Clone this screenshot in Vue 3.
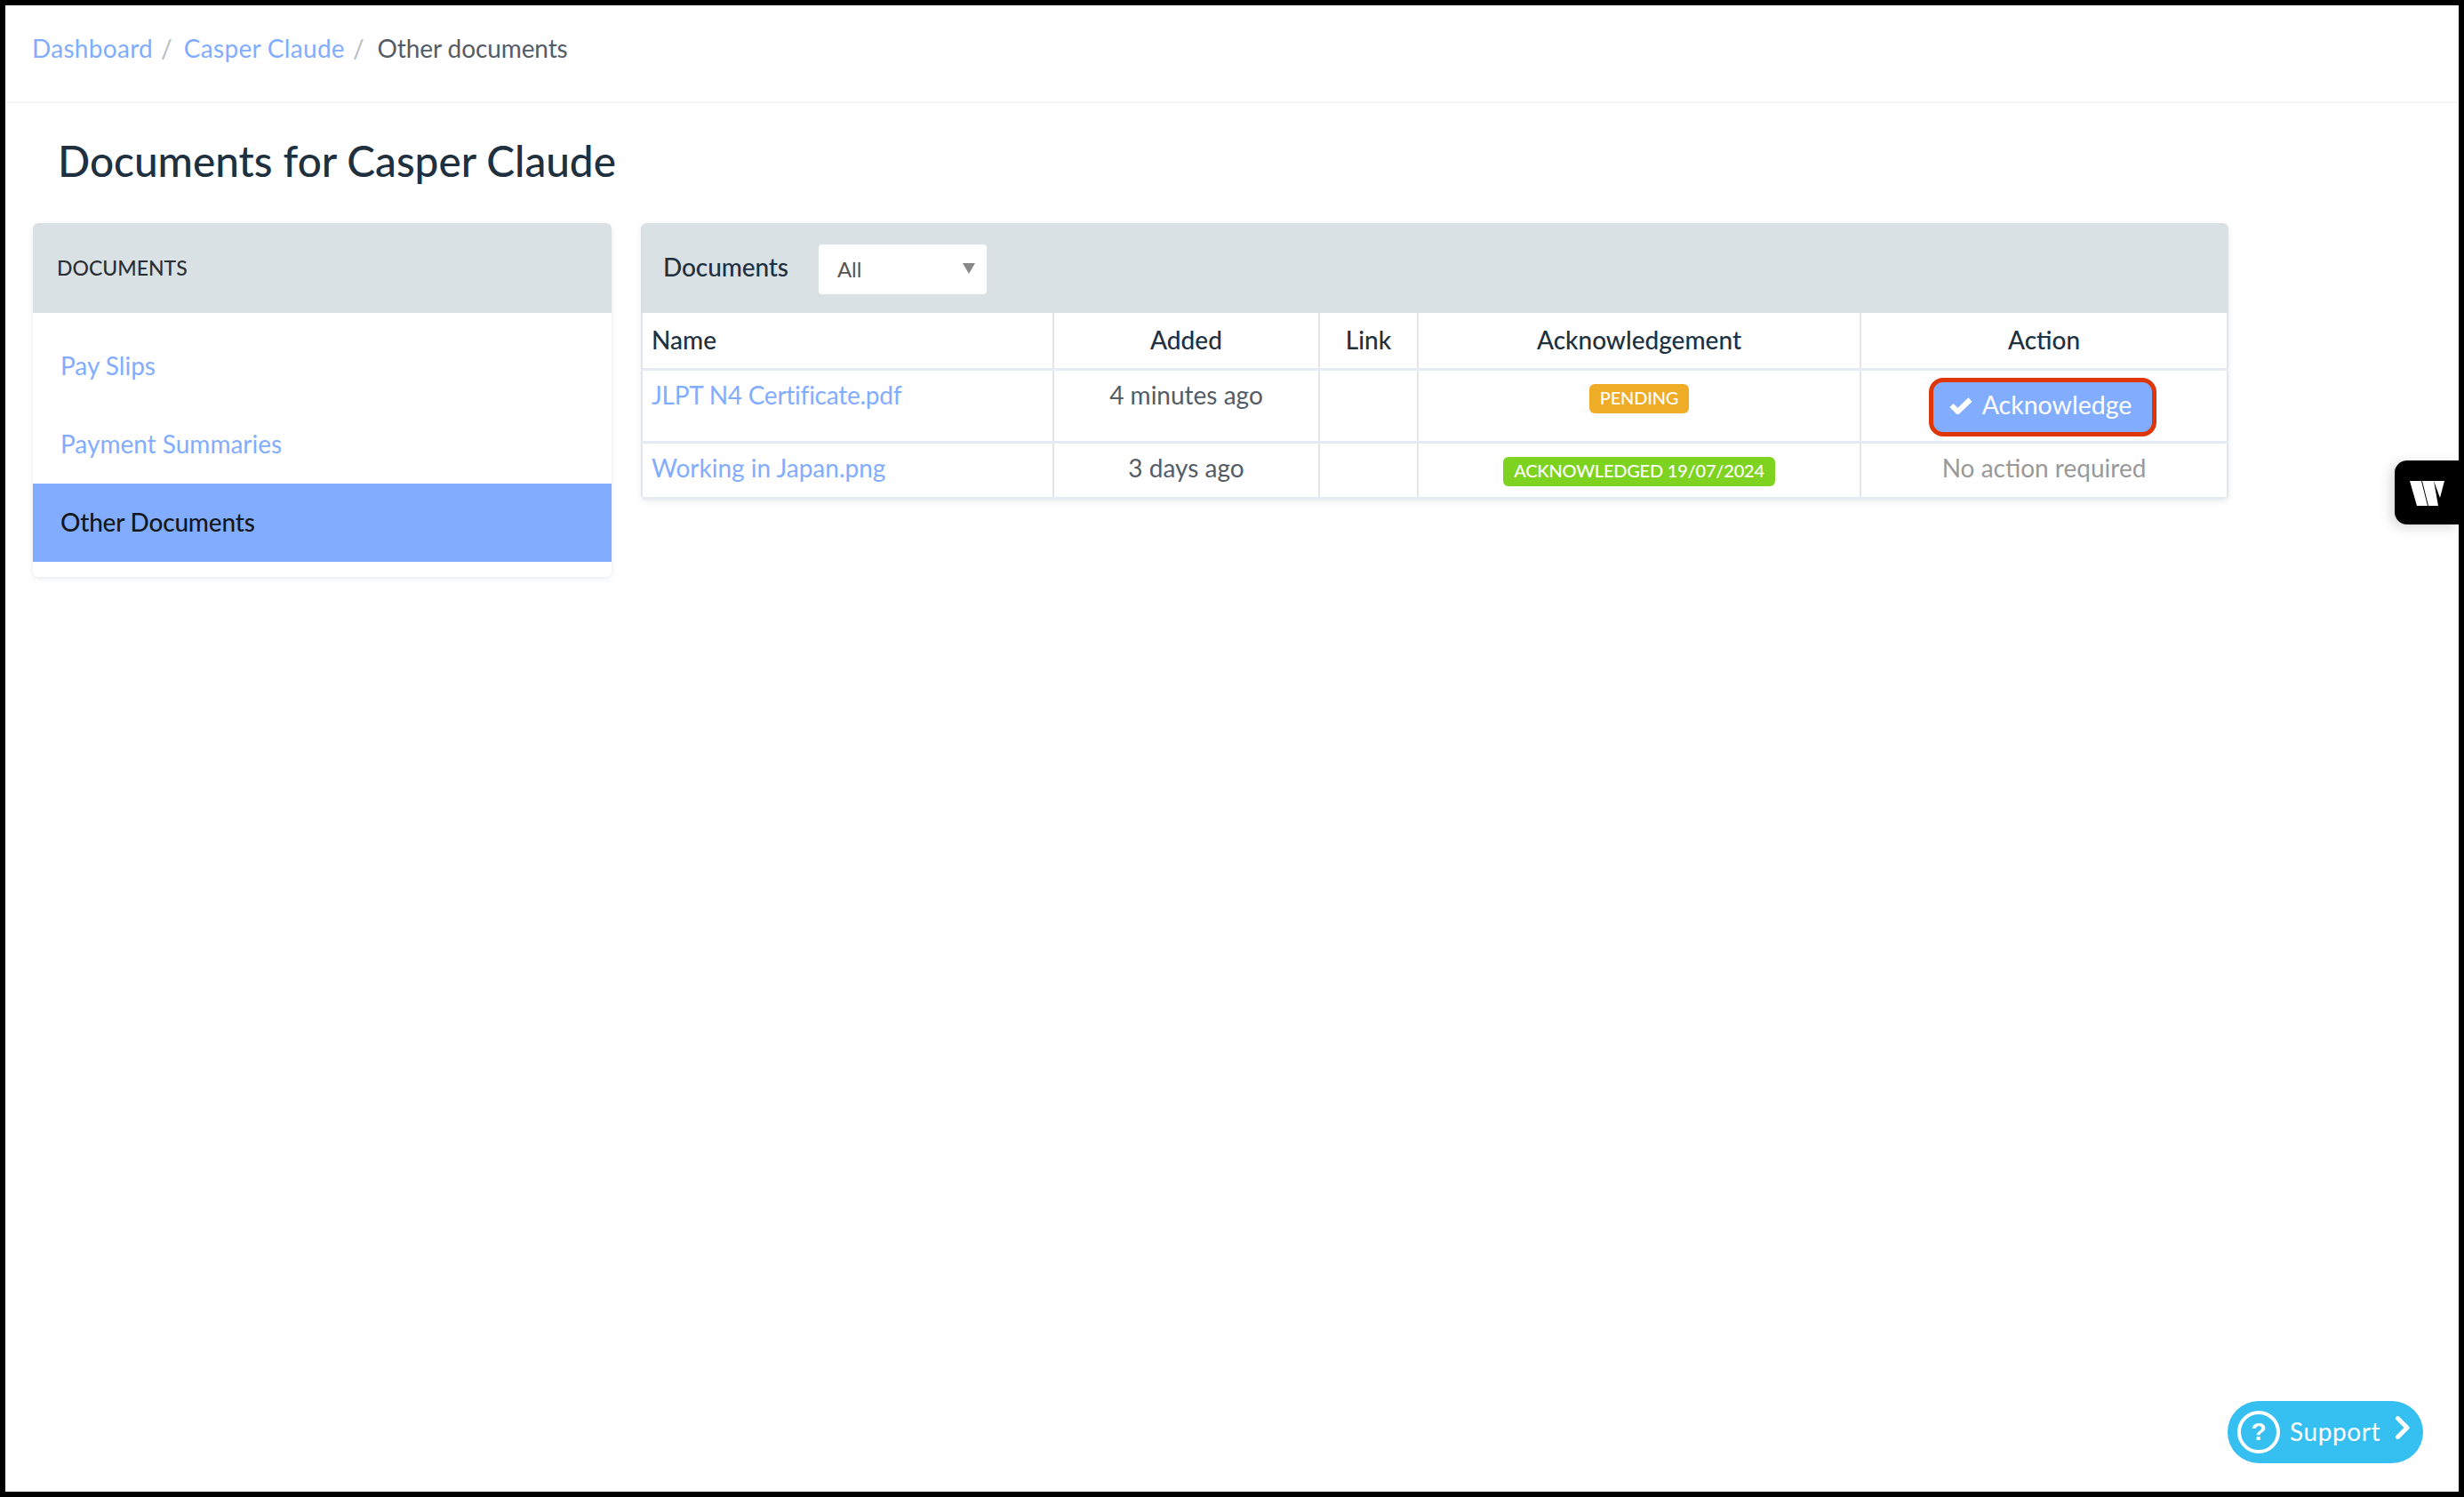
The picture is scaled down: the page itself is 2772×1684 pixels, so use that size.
<script setup>
const menu = [
  { label: 'Pay Slips', active: false },
  { label: 'Payment Summaries', active: false },
  { label: 'Other Documents', active: true },
]
</script>

<template>
  <div class="page">
    <nav class="crumbs">
      <a class="link wide">Dashboard</a><span class="sep">/</span>
      <a class="link wide">Casper Claude</a><span class="sep">/</span>
      <span class="current">Other documents</span>
    </nav>
    <h1 class="title">Documents for Casper Claude</h1>
    <div class="columns">
      <aside class="card side">
        <div class="side-head">DOCUMENTS</div>
        <ul class="menu">
          <li v-for="m in menu" :key="m.label" class="item" :class="{ active: m.active }">{{ m.label }}</li>
        </ul>
      </aside>
      <section class="card main">
        <header class="main-head">
          <span class="main-title">Documents</span>
          <div class="select"><span>All</span><i class="arrow"></i></div>
        </header>
        <table class="table">
          <colgroup>
            <col class="c1" /><col class="c2" /><col class="c3" /><col class="c4" /><col class="c5" />
          </colgroup>
          <thead>
            <tr><th class="left">Name</th><th>Added</th><th>Link</th><th>Acknowledgement</th><th>Action</th></tr>
          </thead>
          <tbody>
            <tr class="r1">
              <td class="left"><a class="link narrow">JLPT N4 Certificate.pdf</a></td>
              <td>4 minutes ago</td>
              <td></td>
              <td><span class="badge pending">PENDING</span></td>
              <td class="act">
                <button class="btn">
                  <svg class="check" viewBox="0 0 26 20" width="26" height="20"><path d="M2.5 10 9.5 17 23.5 3.5" fill="none" stroke="#fff" stroke-width="6" /></svg>
                  <span>Acknowledge</span>
                </button>
              </td>
            </tr>
            <tr class="r2">
              <td class="left"><a class="link">Working in Japan.png</a></td>
              <td>3 days ago</td>
              <td></td>
              <td><span class="badge done">ACKNOWLEDGED 19/07/2024</span></td>
              <td class="muted">No action required</td>
            </tr>
          </tbody>
        </table>
      </section>
    </div>

    <div class="w-tab">
      <svg viewBox="0 0 39 29" width="39" height="29">
        <polygon points="0,1 13,1 20,29 8,29" fill="#fff" />
        <polygon points="14,1 27,1 32,29 21,29" fill="#fff" />
        <polygon points="27,1 39,1 34,20" fill="#fff" />
      </svg>
    </div>

    <div class="support">
      <span class="q">?</span>
      <span class="s-text">Support</span>
      <svg class="chev" viewBox="0 0 16 26" width="16" height="26"><path d="M2.5 2.5 13 13 2.5 23.5" fill="none" stroke="#fff" stroke-width="5" stroke-linecap="round" stroke-linejoin="round" /></svg>
    </div>
  </div>
</template>

<style>
html, body { margin: 0; background: #fff; }
</style>

<style scoped>
.page {
  position: relative;
  box-sizing: border-box;
  width: 2772px;
  height: 1684px;
  border: 6px solid #000;
  background: #fff;
  overflow: hidden;
  font-family: Lato, "Open Sans", sans-serif;
  font-size: 28px;
  color: #545c66;
}
.link { color: #82adfe; }
.wide { letter-spacing: 0.3px; }
.narrow { letter-spacing: -0.25px; }
.crumbs {
  box-sizing: border-box;
  height: 110px;
  padding: 27px 0 0 30px;
  line-height: 42px;
  border-bottom: 2px solid #f3f4f6;
  font-size: 28px;
}
.sep { color: #b8bcc2; margin: 0 13px 0 9px; }
.current { margin-left: 2px; letter-spacing: -0.1px; }
.title {
  margin: 0;
  padding: 33px 0 0 59px;
  height: 135px;
  box-sizing: border-box;
  font-size: 47.7px;
  line-height: 64px;
  font-weight: 500;
  color: #20303f;
}
.columns { display: flex; gap: 33px; padding-left: 31px; align-items: flex-start; }
.card {
  background: #fff;
  border-radius: 6px;
  box-shadow: 0 2px 6px rgba(30, 50, 80, 0.1);
  overflow: hidden;
}
.side { width: 651px; height: 398px; }
.side-head {
  height: 101px;
  box-sizing: border-box;
  background: #dae1e5;
  padding: 0 27px;
  line-height: 101px;
  font-size: 23px;
  font-weight: 500;
  color: #2b2f33;
}
.menu { list-style: none; margin: 0; padding: 16px 0 0; }
.item {
  height: 88px;
  line-height: 86px;
  padding-left: 31px;
  color: #82adfe;
}
.item.active { background: #82adfe; color: #14181c; font-weight: 500; letter-spacing: -0.2px; }
.main { width: 1786px; }
.main-head {
  height: 101px;
  background: #dae1e5;
  display: flex;
  align-items: center;
  padding-left: 25px;
  gap: 34px;
}
.main-title { color: #20303f; font-weight: 500; margin-top: -3px; letter-spacing: -0.1px; }
.select {
  position: relative;
  box-sizing: border-box;
  width: 189px;
  height: 56px;
  background: #fff;
  border-radius: 4px;
  padding-left: 21px;
  line-height: 56px;
  font-size: 24px;
  color: #555;
  margin-top: 2px;
}
.arrow {
  position: absolute;
  right: 13px;
  top: 21px;
  border-left: 7px solid transparent;
  border-right: 7px solid transparent;
  border-top: 12px solid #888;
}
.table {
  width: 100%;
  table-layout: fixed;
  border-collapse: collapse;
  border-left: 2px solid #e2e5ea;
  border-right: 2px solid #e2e5ea;
}
.c1 { width: 463px; }
.c2 { width: 299px; }
.c3 { width: 111px; }
.c4 { width: 498px; }
th, td {
  border-left: 2px solid #e2e5ea;
  border-bottom: 3px solid #e6eaf2;
  text-align: center;
  vertical-align: top;
  padding: 0 10px;
  font-weight: 400;
  box-sizing: border-box;
}
th:first-child, td:first-child { border-left: none; }
th {
  height: 63px;
  line-height: 60px;
  font-weight: 500;
  color: #20303f;
}
th.left, td.left { text-align: left; }
.r1 td { height: 82px; line-height: 34px; padding-top: 10px; }
.r2 td { height: 63px; line-height: 34px; padding-top: 10px; }
.badge {
  display: inline-block;
  padding: 0 12px;
  height: 33px;
  line-height: 31px;
  border-radius: 6px;
  color: #fff;
  font-size: 20px;
  font-weight: 500;
  vertical-align: top;
  letter-spacing: -0.2px;
}
.r1 .badge { margin-top: 5px; }
.r2 .badge { margin-top: 5px; }
.pending { background: #eeac27; }
.done { background: #7ed321; }
.r1 td.act { padding-top: 8px; }
.btn {
  box-sizing: border-box;
  display: inline-flex;
  align-items: center;
  justify-content: center;
  gap: 11px;
  width: 256px;
  height: 66px;
  margin-right: 4px;
  border: 5px solid #de3609;
  border-radius: 16px;
  background: #82adfe;
  color: #fff;
  font: inherit;
  font-size: 28.5px;
  padding: 0 0 6px;
}
.check { flex: none; margin-left: -4px; margin-top: 2px; }
.muted { color: #999; }
.w-tab {
  position: absolute;
  right: 0;
  top: 512px;
  width: 72px;
  height: 72px;
  background: #000;
  border-radius: 14px 0 0 14px;
  box-shadow: -4px 3px 14px rgba(0, 0, 0, 0.16);
  display: flex;
  align-items: center;
  justify-content: flex-start;
  padding-left: 17px;
  box-sizing: border-box;
}
.support {
  position: absolute;
  left: 2500px;
  top: 1570px;
  width: 220px;
  height: 70px;
  border-radius: 35px;
  background: #36c0f2;
  color: #fff;
  display: flex;
  align-items: center;
  box-sizing: border-box;
  padding-left: 11px;
}
.q {
  box-sizing: border-box;
  width: 48px;
  height: 48px;
  border: 4px solid #fff;
  border-radius: 50%;
  text-align: center;
  line-height: 40px;
  font-size: 28px;
  font-weight: 900;
  font-family: "Liberation Sans", sans-serif;
}
.s-text { margin-left: 11px; margin-top: -2px; font-size: 28px; font-weight: 400; letter-spacing: 0.6px; }
.chev { position: absolute; left: 189px; top: 17px; }
</style>
